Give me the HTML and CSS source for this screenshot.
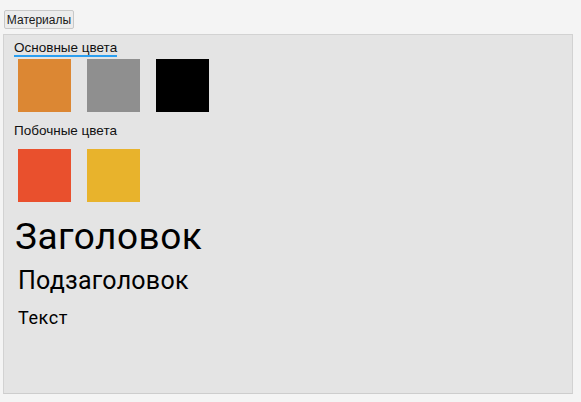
FILE: index.html
```html
<!DOCTYPE html>
<html lang="ru">
<head>
<meta charset="utf-8">
<link rel="stylesheet" href="styles.css">
</head>
<body>
<div class="page">
  <button class="tab">Материалы</button>
  <div class="panel">
    <div class="label focused">Основные цвета</div>
    <div class="swatches">
      <div class="swatch orange"></div>
      <div class="swatch gray"></div>
      <div class="swatch black"></div>
    </div>
    <div class="label second">Побочные цвета</div>
    <div class="swatches">
      <div class="swatch red"></div>
      <div class="swatch yellow"></div>
    </div>
    <div class="h1">Заголовок</div>
    <div class="h2">Подзаголовок</div>
    <div class="text">Текст</div>
  </div>
</div>
</body>
</html>
```

FILE: styles.css
```css
html, body {
  margin: 0;
  padding: 0;
  background: #f4f4f4;
  width: 581px;
  height: 402px;
  overflow: hidden;
}
.page {
  display: flex;
  flex-direction: column;
  align-items: flex-start;
  padding: 10px 0 0 3px;
}
.tab {
  margin: 0 0 0 1px;
  height: 19px;
  width: 70px;
  padding: 0;
  font-family: "Liberation Sans", Arial, sans-serif;
  font-size: 12px;
  color: #1a1a1a;
  background: #ececec;
  border: 1px solid #c8c8c8;
  border-radius: 2px;
}
.panel {
  margin-top: 5px;
  box-sizing: border-box;
  width: 570px;
  height: 360px;
  background: #e4e4e4;
  border: 1px solid #d2d2d2;
  border-bottom-color: #cdcdcd;
  padding: 6px 0 0 10px;
  display: flex;
  flex-direction: column;
  align-items: flex-start;
  font-family: "Liberation Sans", Arial, sans-serif;
  color: #111;
}
.label {
  font-size: 13.5px;
  line-height: 14px;
}
.focused {
  border-bottom: 2px solid #2b9ff0;
  padding-bottom: 0;
}
.second {
  margin-top: 12px;
}
.swatches {
  display: flex;
  gap: 16px;
  padding-left: 4px;
  margin-top: 2px;
}
.second + .swatches {
  margin-top: 11px;
}
.swatch {
  width: 53px;
  height: 53px;
}
.orange { background: #dc8733; }
.gray { background: #8f8f8f; }
.black { background: #000; }
.red { background: #e9502d; }
.yellow { background: #e8b32c; }
.h1 {
  font-family: Roboto, sans-serif;
  font-size: 37px;
  line-height: 40px;
  letter-spacing: 0.5px;
  margin-top: 15px;
  margin-left: 1px;
  color: #000;
}
.h2 {
  font-family: Roboto, sans-serif;
  font-size: 25px;
  line-height: 28px;
  letter-spacing: 0.25px;
  margin-top: 10px;
  margin-left: 4px;
  color: #000;
}
.text {
  font-family: Roboto, sans-serif;
  font-size: 18px;
  line-height: 20px;
  letter-spacing: 0.6px;
  margin-top: 13px;
  margin-left: 4px;
  color: #000;
}
```
